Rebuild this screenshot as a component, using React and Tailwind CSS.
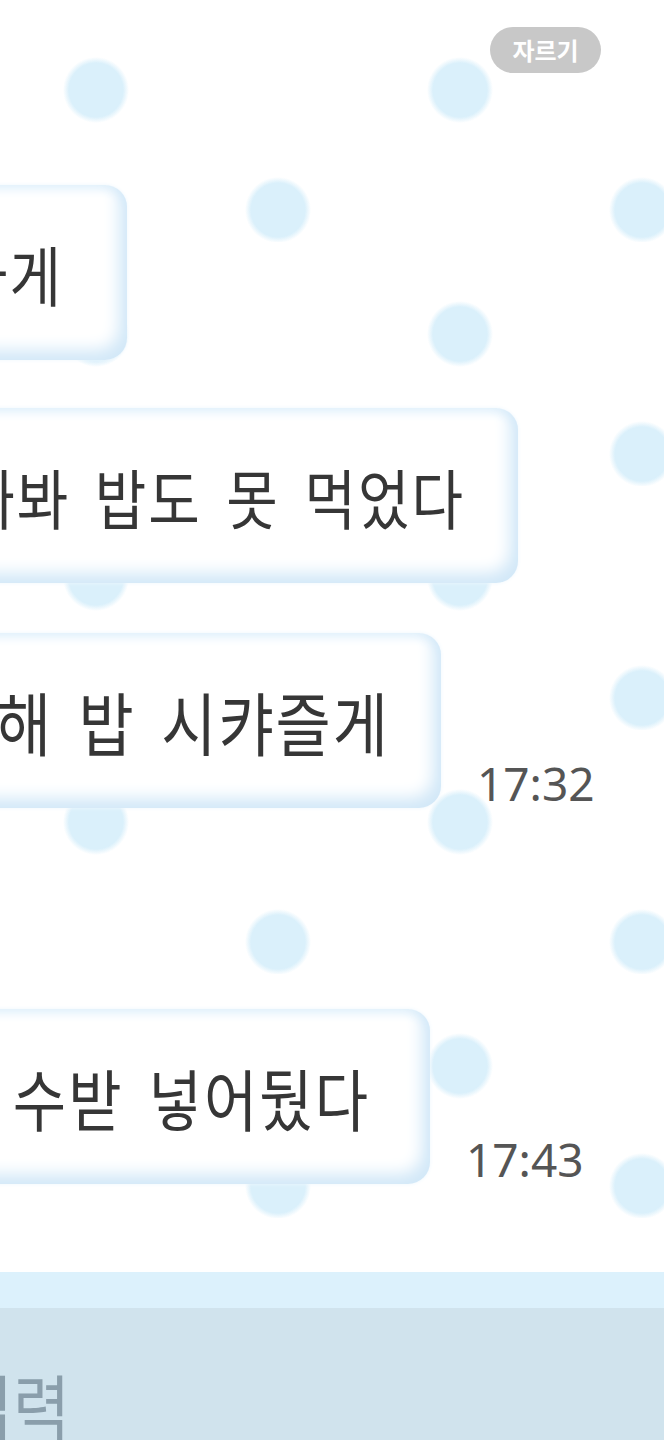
import React from 'react';

const messages = [
  { text: '내가 빨리 가게', box: 'w-[427px] -ml-[300px] pr-[64px]', size: 'text-[56px]', gap: 'mt-0' },
  { text: '오늘 바빠봐 밥도 못 먹었다', box: 'w-[818px] -ml-[300px] pr-[53px]', size: 'text-[56px]', gap: 'mt-[48px]' },
  { text: '내가 보상해 밥 시캬즐게', box: 'w-[741px] -ml-[300px] pr-[51px]', size: 'text-[60px]', gap: 'mt-[50px]', time: '17:32' },
  { text: '냉장고에 수받 넣어뒀다', box: 'w-[730px] -ml-[300px] pr-[60px]', size: 'text-[58px]', gap: 'mt-[201px]', time: '17:43' },
];

const Bubble = ({ msg }) => (
  <div className={`flex items-end ${msg.gap}`}>
    <div
      className={`${msg.box} h-[175px] shrink-0 flex items-center justify-end rounded-[22px] bg-white shadow-[inset_-8px_-10px_16px_#d2e8f8,inset_0_5px_10px_#e4f2fc,0_0_4px_#eef7fd]`}
    >
      <span className={`inline-block whitespace-nowrap ${msg.size} leading-none tracking-[2px] text-[#363636] scale-y-[1.15] [word-spacing:10px]`}>
        {msg.text}
      </span>
    </div>
    {msg.time && (
      <span className="ml-[36px] mb-[2px] text-[46px] leading-none text-[#555555] font-['Noto_Sans',sans-serif]">
        {msg.time}
      </span>
    )}
  </div>
);

export default function App() {
  return (
    <div className="w-[664px] h-[1440px] overflow-hidden flex flex-col bg-white font-['Noto_Sans_CJK_KR','Noto_Sans',sans-serif]">
      <div className="relative h-[1272px] shrink-0 bg-white bg-[radial-gradient(circle_at_96px_92px,#daf0fb_27px,rgba(218,240,251,0)_33px),radial-gradient(circle_at_278px_212px,#daf0fb_27px,rgba(218,240,251,0)_33px)] bg-[length:364px_244px] bg-[position:0_-2px]">
        <button className="absolute top-[27px] left-[490px] w-[111px] h-[46px] rounded-full bg-[#c8c8c8] text-white text-[24px] font-bold flex items-center justify-center">
          자르기
        </button>
        <div className="flex flex-col pt-[185px]">
          {messages.map((m, i) => (
            <Bubble key={i} msg={m} />
          ))}
        </div>
      </div>
      <div className="h-[36px] shrink-0 bg-[#dcf1fc]" />
      <div className="flex-1 bg-[#d0e3ed] pt-[60px]">
        <div className="-ml-[229px] whitespace-nowrap text-[62px] leading-none text-[#8a9eab] scale-y-[1.15] origin-top">
          메시지 입력
        </div>
      </div>
    </div>
  );
}
